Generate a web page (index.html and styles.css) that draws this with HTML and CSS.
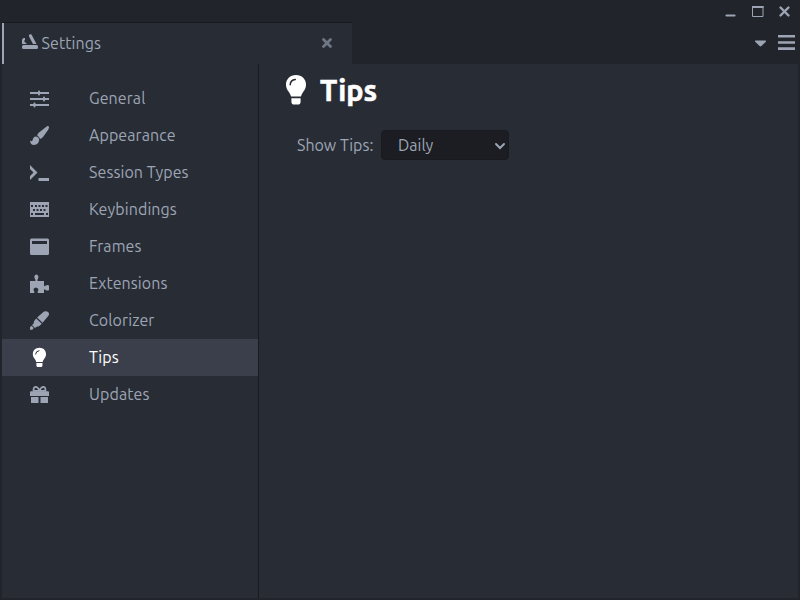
FILE: index.html
```html
<!DOCTYPE html>
<html lang="en">
<head>
<meta charset="utf-8">
<title>Settings</title>
<link rel="stylesheet" href="styles.css">
</head>
<body>
<div class="window">
  <header class="titlebar">
    <svg width="76" height="22" viewBox="0 0 76 22" fill="none" stroke="currentColor">
      <path d="M4.500 15.500h8" stroke-width="2.200" stroke-linecap="round"/>
      <path d="M30.500 6v10.500h10.500V6" stroke-width="1"/><path d="M30 7h11.500" stroke-width="2"/>
      <path d="M58.500 7.500l8 8M66.500 7.500l-8 8" stroke-width="2.400" stroke-linecap="round"/>
    </svg>
  </header>
  <div class="tabbar">
    <div class="tab">
      <svg class="tab-icon" width="16" height="16" viewBox="0 0 16 16" fill="currentColor"><rect y="11" width="16" height="4" rx="1.500"/><path d="M7 .8Q8-.2 9.500.5L14.500 10H11L7 2.500zM0 5.500L1.500 4H3v2L2 7l1 1.200L5 10H0z"/></svg>
      <span class="tab-title">Settings</span>
      <svg class="tab-close" width="12" height="12" viewBox="0 0 12 12"><path d="M2.500 2.500l7 7M9.500 2.500l-7 7" stroke="currentColor" stroke-width="2.800" stroke-linecap="round"/></svg>
    </div>
    <svg class="tab-tools" width="46" height="41" viewBox="0 0 46 41" fill="currentColor"><path d="M1.500 17.500h10q1 .3.300 1.200L7.400 23q-.9.800-1.800 0L1.200 18.700q-.6-.9.300-1.200z"/><path d="M24 12h17v2.600H24zM24 18.200h17v2.600H24zM24 24.300h17v2.600H24z"/></svg>
  </div>
  <div class="body">
    <nav class="sidebar">
      <div class="item"><svg viewBox=".5 0 19 20"><path d="M.5 5h19M.5 11h19M.5 17h19" stroke="currentColor" stroke-width="2"/><rect x="8.500" y="2.500" width="2" height="5" rx="1"/><rect x="13.500" y="8.500" width="2" height="5" rx="1"/><rect x="4" y="14.500" width="2" height="5" rx="1"/></svg><span>General</span></div>
      <div class="item"><svg viewBox=".5 0 19 20"><path d="M17.500 1.200q2-.7 2 1.200-.2 1.200-1 2.600l-5 7q-1.200 1.600-3 1.900-.7-2.500-2.800-3.500.4-1.500 1.500-2.600zM6.300 11.400q3 .3 3.400 3.300-.5 5-5.200 5.200-3.600 0-4-4.500l1.500.8q1-.1 1.300-1.800.7-3 3-3z"/></svg><span>Appearance</span></div>
      <div class="item"><svg viewBox=".5 0 19 20"><path d="M.5 3L8 10.500.5 18v-4l3.500-3.500L.5 7zM9 16h10.500v3H9z"/></svg><span>Session Types</span></div>
      <div class="item"><svg viewBox=".5 0 19 20"><path fill-rule="evenodd" d="M.5 3h19v15H.5zM1.500 6v2h2V6zm4 0v2h2V6zm3.500 0v2h2V6zm3.500 0v2h2V6zm3.500 0v2h2V6zM3.500 10v2h2v-2zm3.500 0v2h2v-2zm3.500 0v2h2v-2zm3.500 0v2h2v-2zM1.500 14v2h2v-2zm4 0v2h9v-2zM16.500 14v2h2v-2z"/></svg><span>Keybindings</span></div>
      <div class="item"><svg viewBox=".5 0 19 20"><path fill-rule="evenodd" d="M2 2.400h16q1.500 0 1.500 1.500v13.600q0 1.500-1.500 1.500H2Q.5 19 .5 17.500V3.900q0-1.500 1.500-1.500zM2.500 5v3h15V5z"/></svg><span>Frames</span></div>
      <div class="item"><svg viewBox=".5 0 19 20"><path d="M.5 8h5.300q.8-1-.6-2.600Q4 2.500 6.800 1.500 9.700 2.500 8.600 5.400 7.500 6.800 8 8h6.500v4.800q.9.800 1.600-.2 2.300-1 3.400 0v4.300q-1.300 1-3.400 0-.9-1.100-1.600-.2v3.200H8.200q-.5-1.200.5-2.200.6-2.600-2.300-3.200-3 .5-2.100 3.200.9 1 .4 2.200H.5z"/></svg><span>Extensions</span></div>
      <div class="item"><svg viewBox=".5 0 19 20"><path d="M14.500 1.600q2.500-.9 4 .3 1.700 1.500.6 3.500l-6 7.300-5.500-5.200zM6.700 8.400l5.600 5.400-2.800 2.400q-1 .5-2 .2l-2 1.600-3-3 1.900-1.800q-.3-1.600.5-2.500zM2 15.700L4.300 18l-1.500 1.700H.5v-2.400z"/></svg><span>Colorizer</span></div>
      <div class="item selected"><svg viewBox=".5 0 19 20"><use href="#bulb" transform="translate(3 .7) scale(.66)"/></svg><span>Tips</span></div>
      <div class="item"><svg viewBox=".5 0 19 20"><path d="M.5 8.200q0-1 1-1h17q1 0 1 1V12H.5zM1.500 13H9v6H2q-.5 0-.5-.5zm9.500 0h7.500v5.500q0 .5-.5.5h-7z"/><path d="M10 6.900Q8.500 2.800 6 2.900 3.700 3.200 4 6.900h12q.3-3.700-2-4-2.500-.1-4 4" fill="none" stroke="currentColor" stroke-width="1.700"/></svg><span>Updates</span></div>
    </nav>
    <main class="content">
      <h2>
        <svg class="bulb" width="20" height="30" viewBox=".5 0 20 30"><g id="bulb"><path d="M10.500 0C4.600 0 .5 4.200.5 9.500c0 3.200 1.100 5.200 2.700 7.200 1.200 1.600 2 3.200 2.400 4.800h9.800c.4-1.600 1.200-3.200 2.400-4.800 1.600-2 2.700-4 2.700-7.200C20.500 4.200 16.400 0 10.500 0zM5.900 23.200h9.200v3.500q0 2.800-2.800 2.800H8.700q-2.800 0-2.800-2.800z" fill="#fff"/><path class="glint" d="M4.700 9.700q.2-4.600 5.100-5.200" fill="none" stroke-width="1.500" stroke-linecap="round"/></g></svg>
        <span>Tips</span>
      </h2>
      <div class="field"><span class="label">Show Tips:</span><div class="select"><span>Daily</span><svg width="12" height="8" viewBox="0 0 12 8"><path d="M2 2l4 4 4-4" fill="none" stroke="currentColor" stroke-width="2" stroke-linecap="round"/></svg></div></div>
    </main>
  </div>
</div>
</body>
</html>
```
FILE: styles.css
```css
* { box-sizing: border-box; }
body { margin: 0; background: #21252b; color: #9da5b4; font: 16px/20px Ubuntu, "Noto Sans", sans-serif; }
.window { height: 600px; padding: 0 2px 2px; display: flex; flex-direction: column; }
.titlebar { height: 22px; display: flex; justify-content: flex-end; }
.titlebar svg { flex: none; }
.tabbar { height: 42px; display: flex; justify-content: space-between; }
.tab { width: 350px; background: #282c34; border-top: 1px solid #181a1f; display: flex; align-items: center; padding: 0 19px 2px 18px; box-shadow: inset 2px 0 #9da5b4; }
.tab-icon { margin: -1px 3.500px 0 2px; }
.tab-title, .item span { letter-spacing: .08px; }
.tab-close { margin-left: auto; color: #6f7684; }
.tab-tools { margin: 1px -2px 0 0; }
.body { flex: 1; display: flex; background: #282c34; }
.sidebar { width: 257px; border-right: 1px solid #181a1f; padding-top: 16px; }
.item { height: 37px; display: flex; align-items: center; padding: 0 0 2px 28px; }
.item svg { width: 19px; height: 20px; margin-right: 40px; fill: currentColor; flex: none; }
.item.selected { background: #3a3f4b; color: #fff; }
.glint { stroke: #282c34; }
.content { flex: 1; padding: 11px 0 0 27px; }
h2 { margin: 0; height: 30px; display: flex; align-items: center; gap: 14px; color: #fff; font-size: 28.800px; font-weight: 700; line-height: 30px; -webkit-text-stroke: .6px #fff; letter-spacing: .1px; }
.field { display: flex; align-items: center; margin: 25px 0 0 11px; }
.label { width: 84px; white-space: nowrap; }
.select { width: 128px; height: 30px; background: #1b1d23; border: 1px solid #181a1f; border-radius: 4px; display: flex; align-items: center; justify-content: space-between; padding: 0 2px 0 16px; }
.select svg { margin-top: 2px; }
```
